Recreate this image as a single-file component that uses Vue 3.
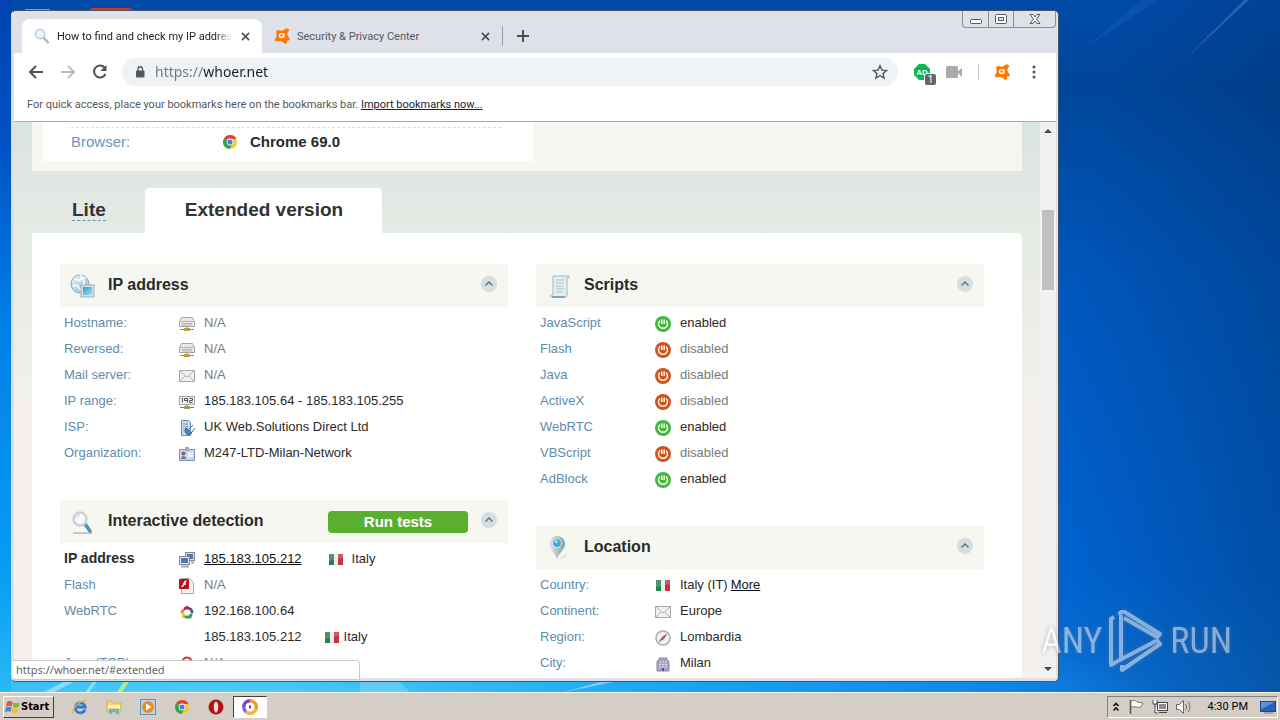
<template>
  <svg class="sprite" aria-hidden="true">
    <defs>
      <linearGradient id="sky" x1="0" y1="0" x2="1" y2="1">
        <stop offset="0" stop-color="#eef6fb" />
        <stop offset="1" stop-color="#8db4d2" />
      </linearGradient>
      <linearGradient id="screen" x1="0" y1="0" x2="1" y2="1">
        <stop offset="0" stop-color="#2f9cc4" />
        <stop offset="1" stop-color="#9be4f5" />
      </linearGradient>
      <linearGradient id="metal" x1="0" y1="0" x2="1" y2="0">
        <stop offset="0" stop-color="#e8eaeb" />
        <stop offset="1" stop-color="#8f979b" />
      </linearGradient>
    </defs>
    <symbol id="globe" viewBox="0 0 26 26">
      <circle cx="10" cy="11" r="9" fill="url(#sky)" stroke="#8aa8c0" />
      <path d="M4 6c3 0 4 2 6 1s3-3 6-2M3 13c3-2 5 0 6 2s3 1 4 4M10 2c4 3 5 8 3 12" fill="none" stroke="#fff" stroke-width="1.6" />
      <rect x="11" y="12" width="13" height="12" fill="#d3dde3" stroke="#9fb0ba" />
      <rect x="13" y="14" width="9" height="8" fill="url(#screen)" />
    </symbol>
    <symbol id="scroll" viewBox="0 0 26 26">
      <path d="M7 3h16v2h-2v17c0 2-1 2-2 2H5c-1-1-1-2 1-2h1z" fill="#e3eeee" stroke="#a5b8b9" />
      <path d="M6 24h13" stroke="#7c8f90" stroke-width="1.5" />
      <path d="M10 7h8M10 10h8M10 13h7M10 16h8M10 19h6" stroke="#a9c3c5" />
    </symbol>
    <symbol id="magnifier" viewBox="0 0 26 26">
      <path d="M3 24h19" stroke="#c4c9c9" stroke-width="2" />
      <path d="M15 15l5 7" stroke="#4f94b6" stroke-width="3.600" stroke-linecap="round" />
      <circle cx="10" cy="10" r="6.500" fill="#f7fafc" stroke="#cfd1d6" stroke-width="2.500" />
      <path d="M6 10c0-3 2-4 4-4" fill="none" stroke="#dbe9f3" stroke-width="2" />
    </symbol>
    <symbol id="search" viewBox="0 0 16 16">
      <path d="M9.500 9.500l4.500 5" stroke="#a9b1bf" stroke-width="2.2" stroke-linecap="round" />
      <circle cx="6" cy="6" r="4.700" fill="#e9f2fb" stroke="#bcc8da" stroke-width="1.400" />
    </symbol>
    <symbol id="pin" viewBox="0 0 26 26">
      <path d="M12 25l8-6 1 2z" fill="#dcdedd" />
      <path d="M11 25C10 18 3 15 3 9a8 8 0 0 1 16 0c0 6-7 9-8 16z" fill="url(#metal)" />
      <circle cx="11" cy="8" r="4.500" fill="#38aed2" stroke="#dce8ec" />
      <circle cx="10" cy="6.500" r="1.500" fill="#aee8f6" />
    </symbol>
    <symbol id="server" viewBox="0 0 16 16">
      <path d="M2.500 1.500h11l2 4v5H.5v-5z" fill="#e9e9e9" stroke="#a6a6a6" />
      <path d="M1 5.500h14M3 7.500h10M3 9h10" stroke="#b4b4b4" />
      <path d="M8 11v3M1 13.500h14" stroke="#8b8b8b" />
      <path d="M5 13.500h6" stroke="#b9a03c" stroke-width="3" />
    </symbol>
    <symbol id="mail" viewBox="0 0 16 16">
      <rect x=".5" y="2.500" width="15" height="11" fill="#f0f0f0" stroke="#a9a9a9" />
      <path d="M1 3l7 6 7-6M1 13l5-5M15 13l-5-5" fill="none" stroke="#b2b2b2" />
    </symbol>
    <symbol id="range" viewBox="0 0 16 16">
      <rect x=".5" y="2.500" width="15" height="8" fill="#f1f1f1" stroke="#a5a5a5" />
      <path d="M2.500 4.500h1v4M5.500 4.500h3v4M5.500 4.500v2h3M10.500 4.500h3v2h-3v2h3" fill="none" stroke="#555" />
      <path d="M8 11v3M1 13.500h14" stroke="#777" />
      <path d="M5 13.500h6" stroke="#8da35d" stroke-width="3" />
    </symbol>
    <symbol id="isp" viewBox="0 0 16 16">
      <path d="M2.500.5h7l2 2v13h-9z" fill="#c4daea" stroke="#668eaf" />
      <path d="M4 4h5M4 7h5M4 10h3" stroke="#779dbb" />
      <path d="M7 8l6 5-4 2-3-3z" fill="#4787bb" stroke="#2f5f8f" />
      <path d="M10 9l4-4M13 12l3-4" stroke="#3c6c98" />
    </symbol>
    <symbol id="badge" viewBox="0 0 16 16">
      <rect x=".5" y="3.500" width="15" height="11" fill="#c8d5f2" stroke="#8393bd" />
      <rect x="6" y="1" width="4" height="4" fill="#a8a8ae" />
      <path d="M9 7.500h5M9 10h5" stroke="#fff" stroke-width="1.500" />
      <circle cx="4.500" cy="7.500" r="2" fill="#8b6350" />
      <path d="M2 13c0-4 5-4 5 0z" fill="#6a79a8" />
    </symbol>
    <symbol id="network" viewBox="0 0 16 16">
      <rect x="6.500" y=".5" width="9" height="8" fill="#d8dce5" stroke="#7f8793" />
      <rect x="8" y="2" width="6" height="5" fill="#4f75b2" />
      <rect x=".5" y="4.500" width="10" height="8" fill="#e5e8ee" stroke="#7f8793" />
      <rect x="2" y="6" width="7" height="5" fill="#4f75b2" />
      <path d="M2 14.500h8M12 10.500h3" stroke="#a5a5a5" stroke-width="2" />
    </symbol>
    <symbol id="flash" viewBox="0 0 16 16">
      <path d="M2.500.5h8l4 4v11h-12z" fill="#f4f4f4" stroke="#aaa" />
      <rect x="0" y="1" width="10" height="10" rx="1" fill="#b51018" />
      <path d="M7.500 3C5 3 5.500 5 4.500 7c-.5 1-1 1.500-2 1.500M4 6h3" fill="none" stroke="#fff" stroke-width="1.500" />
    </symbol>
    <symbol id="webrtc" viewBox="0 0 16 16">
      <g fill="none" stroke-width="3" stroke-linecap="round">
        <path d="M4 6.500L3 8" stroke="#df8732" />
        <path d="M4.500 10.500v2" stroke="#dfc336" />
        <path d="M7 13h4l1-2" stroke="#3c9b51" />
        <path d="M13 8l-1-2.500" stroke="#3a69a8" />
        <path d="M6 4.500l2-1 2 1" stroke="#b5272b" />
      </g>
    </symbol>
    <symbol id="java" viewBox="0 0 16 16">
      <circle cx="8" cy="6" r="4.500" fill="none" stroke="#d62b32" stroke-width="2" />
    </symbol>
    <symbol id="italy" viewBox="0 0 16 16">
      <rect x="1" y="2" width="5" height="11" fill="#23824a" />
      <rect x="6" y="2" width="4" height="11" fill="#ececec" />
      <rect x="10" y="2" width="5" height="11" fill="#c23542" />
      <path d="M1 2h14v4L1 9z" fill="#fff" opacity=".18" />
    </symbol>
    <symbol id="power" viewBox="0 0 16 16">
      <circle cx="8" cy="8" r="8" fill="currentColor" />
      <path d="M5 4.500a4.500 4.500 0 1 0 6 0M6.800 3.500v4.500M9.200 3.500v4.500" fill="none" stroke="#fffbe2" stroke-width="1.500" />
    </symbol>
    <symbol id="compass" viewBox="0 0 16 16">
      <circle cx="8" cy="8" r="7" fill="#f1f1ec" stroke="#acaca8" stroke-width="1.500" />
      <path d="M12.500 3.500L9 9 7 7z" fill="#bd4747" />
      <path d="M3.500 12.500L7 7l2 2z" fill="#4f6db0" />
    </symbol>
    <symbol id="building" viewBox="0 0 16 16">
      <path d="M4 2h8v3h2v10H2V5h2z" fill="#a6a5c5" stroke="#8b89aa" />
      <path d="M4 6h8M4 8.500h8M4 11h8" stroke="#e2e1f0" stroke-dasharray="2 1" />
      <rect x="7" y="12" width="2" height="3" fill="#55527a" />
    </symbol>
    <symbol id="chrome" viewBox="0 0 16 16">
      <circle cx="8" cy="8" r="7" fill="#f7cb2d" />
      <path d="M8 8L2 4.500A7 7 0 0 1 14.500 5H8z" fill="#dd4437" />
      <path d="M2 4.500a7 7 0 0 0 5.300 10.500L11 9.500 8 8z" fill="#31a251" />
      <circle cx="8" cy="8" r="3.400" fill="#fff" />
      <circle cx="8" cy="8" r="2.600" fill="#3f7fe2" />
    </symbol>
    <symbol id="avast" viewBox="0 0 18 18">
      <path d="M3 3C4.500 1.500 6 3 8 3c2 0 3-1 4.500-2C14 0 17 .5 17 2.500c0 1.500-2 2-2 4s1.500 4 2.500 5-.5 3-1.500 2.500-1.500.5-1.500 2c0 2-2 2.500-3.500 1-1.500-2-3-2.500-5-2.500-2 0-4.500 1-5-.5S2.500 11 3 9 1.500 5 3 3z" fill="#ff7800" />
      <circle cx="8.500" cy="8.500" r="2.200" fill="none" stroke="#fff" stroke-width="1.500" />
      <path d="M11.200 5.800v5.200" stroke="#fff" stroke-width="1.300" />
    </symbol>
    <symbol id="close" viewBox="0 0 10 10">
      <path d="M1 1l8 8M9 1L1 9" stroke="currentColor" stroke-width="1.700" />
    </symbol>
  </svg>

  <div class="desktop">
    <svg class="rays" viewBox="0 0 1280 720" preserveAspectRatio="none" aria-hidden="true">
      <path d="M1182 62L1246-2h5z" fill="#8fc0ef" opacity=".25" />
      <path d="M1085 48L1160-2h-16z" fill="#6fa6dd" opacity=".1" />
      <path d="M25 9h25v2H25z" fill="#7ba3c9" />
      <path d="M92 8h38l4 3H88z" fill="#d8301f" />
      <path d="M40 694l28-14h10l-28 14zM84 694l10-14h4l-10 14z" fill="#c9f3ff" opacity=".55" />
      <path d="M360 682h40l10 10h-50z" fill="#c9f3ff" opacity=".25" />
      <path d="M116 694l9-14h5l-9 14z" fill="#b4ea8a" />
      <path d="M560 693l44-12h14z" fill="#b7e5ff" opacity=".6" />
    </svg>

    <main class="window">
      <header class="tabstrip">
        <div class="tab active">
          <svg class="favicon"><use href="#search" /></svg>
          <button class="tabTitle">How to find and check my IP address</button>
          <button class="tabClose" aria-label="Close tab"><svg><use href="#close" /></svg></button>
        </div>
        <div class="tab">
          <svg class="favicon"><use href="#avast" /></svg>
          <button class="tabTitle">Security &amp; Privacy Center</button>
          <button class="tabClose" aria-label="Close tab"><svg><use href="#close" /></svg></button>
        </div>
        <button class="newTab" aria-label="New tab">
          <svg viewBox="0 0 12 12"><path d="M6 0v12M0 6h12" stroke="#4a4d52" stroke-width="2" /></svg>
        </button>
        <div class="winControls">
          <button aria-label="Minimize">
            <svg viewBox="0 0 14 12"><rect x="1.500" y="6.500" width="11" height="4" rx="1" fill="#fff" stroke="#555a66" /></svg>
          </button>
          <button aria-label="Maximize">
            <svg viewBox="0 0 14 12"><rect x="1.500" y="1.500" width="11" height="9" rx="1" fill="#fff" stroke="#555a66" /><rect x="4.500" y="4.500" width="5" height="3" fill="#e4e5ea" stroke="#555a66" /></svg>
          </button>
          <button class="wide" aria-label="Close">
            <svg viewBox="0 0 14 12"><path d="M2 1.500h3l2 2.500 2-2.500h3L8.500 6l3.500 4.500H9L7 8l-2 2.500H2L5.500 6z" fill="#fff" stroke="#555a66" /></svg>
          </button>
        </div>
      </header>

      <nav class="toolbar">
        <button aria-label="Back">
          <svg viewBox="0 0 16 16"><path d="M15 8H2M8 2L2 8l6 6" fill="none" stroke="#505357" stroke-width="2" /></svg>
        </button>
        <button aria-label="Forward">
          <svg viewBox="0 0 16 16"><path d="M1 8h13M8 2l6 6-6 6" fill="none" stroke="#b9bbbe" stroke-width="2" /></svg>
        </button>
        <button aria-label="Reload">
          <svg viewBox="0 0 16 16"><path d="M13.500 10A6 6 0 1 1 12.500 3.500" fill="none" stroke="#505357" stroke-width="2" /><path d="M14.500 1v6h-6z" fill="#505357" /></svg>
        </button>
        <div class="omnibox">
          <svg class="lock" viewBox="0 0 10 12"><rect x="1" y="4.500" width="8.500" height="7" rx="1" fill="#55585c" /><path d="M3 5V3a2.200 2.200 0 0 1 4.500 0v2" fill="none" stroke="#55585c" stroke-width="1.300" /></svg>
          <input v-model="url" aria-label="Address" spellcheck="false" />
          <button aria-label="Bookmark this page">
            <svg viewBox="0 0 16 16"><path d="M8 1.800l1.900 4.300 4.600.4-3.500 3 1.100 4.600L8 11.700l-4.100 2.400L5 9.500l-3.500-3 4.600-.4z" fill="none" stroke="#505357" stroke-width="1.400" /></svg>
          </button>
        </div>
        <button class="ext adblock" aria-label="AdBlock">
          <svg viewBox="0 0 16 16"><path d="M5 0h6l5 5v6l-5 5H5l-5-5V5z" fill="#10b550" /><text x="8" y="11" text-anchor="middle">AD</text></svg>
          <span class="count">1</span>
        </button>
        <button class="ext" aria-label="Video">
          <svg viewBox="0 0 16 16"><rect x="0" y="2" width="12" height="12" rx="1.500" fill="#aaa" /><path d="M11 8l5-4v9z" fill="#aaa" /></svg>
        </button>
        <span class="divider"></span>
        <button class="ext" aria-label="Avast">
          <svg><use href="#avast" /></svg>
        </button>
        <button class="ext menu" aria-label="Menu">
          <svg viewBox="0 0 16 16" fill="#505357"><circle cx="8" cy="3" r="1.500" /><circle cx="8" cy="8" r="1.500" /><circle cx="8" cy="13" r="1.500" /></svg>
        </button>
      </nav>

      <div class="bookmarks">
        For quick access, place your bookmarks here on the bookmarks bar.
        <a href="#import">Import bookmarks now...</a>
      </div>

      <div class="viewport">
        <div class="page">
          <div class="summary">
            <div class="summaryBox">
              <div class="summaryRow">
                <span class="summaryLabel">Browser:</span>
                <svg><use href="#chrome" /></svg>
                <b>Chrome 69.0</b>
              </div>
            </div>
          </div>

          <div class="versions">
            <button @click="version = 'lite'"><span>Lite</span></button>
            <button class="current" @click="version = 'extended'">Extended version</button>
          </div>

          <div class="report">
            <div v-for="(column, c) in columns" :key="c" class="column">
              <section v-for="block in column" :key="block.title">
                <div class="blockHead">
                  <svg class="blockIcon"><use :href="'#' + block.icon" /></svg>
                  <h2>{{ block.title }}</h2>
                  <button v-if="block.run" class="run">Run tests</button>
                  <button class="toggle" aria-label="Collapse" @click="toggle(block.title)">
                    <svg viewBox="0 0 16 16"><circle cx="8" cy="8" r="8" fill="#d5dfe2" /><path d="M4.500 9.500L8 6l3.500 3.500" fill="none" stroke="#5b7886" stroke-width="1.500" /></svg>
                  </button>
                </div>
                <table v-show="!closed.includes(block.title)">
                  <tbody>
                    <tr v-for="(row, r) in block.rows" :key="r">
                      <th scope="row" :class="{ strong: row.strong }">{{ row.label }}</th>
                      <td class="iconCell">
                        <svg v-if="row.icon" :class="row.state"><use :href="'#' + row.icon" /></svg>
                      </td>
                      <td :class="{ muted: row.value === 'N/A' || row.state === 'disabled' }">
                        <div class="value">
                          <a v-if="row.link" href="#ip">{{ row.value }}</a>
                          <span v-else>{{ row.value }}</span>
                          <a v-if="row.more" class="more" href="#more">More</a>
                          <span v-if="row.country" class="country" :class="{ tight: !row.link }">
                            <svg><use href="#italy" /></svg>{{ row.country }}
                          </span>
                        </div>
                      </td>
                    </tr>
                  </tbody>
                </table>
              </section>
            </div>
          </div>
        </div>
        <div class="scrollbar">
          <svg viewBox="0 0 8 4"><path d="M0 4l4-4 4 4z" /></svg>
          <div class="track"><div class="thumb"></div></div>
          <svg viewBox="0 0 8 4"><path d="M0 0l4 4 4-4z" /></svg>
        </div>
      </div>
      <div class="status">https://whoer.net/#extended</div>
    </main>

    <div class="watermark">
      <span>ANY</span>
      <svg viewBox="0 0 56 62">
        <path d="M6 7L3 9v46l5-3 40-21M13 5v43M13 5l-1-2 3-2 37 23-3 3-33-19M14 55v5l38-26-4-5" fill="none" stroke="#fff" stroke-width="4" stroke-linejoin="round" />
      </svg>
      <span>RUN</span>
    </div>

    <footer class="taskbar">
      <button class="start">
        <svg viewBox="0 0 16 16"><path d="M2 3c2-1.500 4-1 5.500 0L6.500 7.500C5 6.500 3 6.500 1 7.500z" fill="#e5532a" /><path d="M8.500 3.500c2 1 4 1 6 0l-1 4.500c-2 1-4 1-6 0z" fill="#7cb83c" /><path d="M1 8.500c2-1 4-1 5.500 0L5.500 13C4 12 2 12 0 13z" fill="#3a86d8" /><path d="M7.500 9c2 1 4 1 6 0l-1 4.500c-2 1-4 1-6 0z" fill="#f2c02c" /></svg>
        Start
      </button>
      <div class="quick">
        <button aria-label="Internet Explorer">
          <svg viewBox="0 0 16 16"><path d="M13 10.500A5 5 0 1 1 13.200 8H4" fill="none" stroke="#2a7fd4" stroke-width="2.800" /><path d="M1.500 14.500C-1 11 8 0 15 1.500" fill="none" stroke="#e5b63a" stroke-width="1.400" /></svg>
        </button>
        <button aria-label="Explorer">
          <svg viewBox="0 0 16 16"><path d="M1 2h5l1 2h8v9H1z" fill="#f1d574" stroke="#d5b453" /><path d="M2 6h12v3H2z" fill="#fff2b8" /><path d="M3 15v-5h10v5h-3v-2H6v2z" fill="#62b3de" /></svg>
        </button>
        <button aria-label="Media Player">
          <svg viewBox="0 0 16 16"><rect x=".5" y=".5" width="15" height="15" fill="#b7d5ef" stroke="#5b92c4" /><circle cx="8" cy="8" r="6" fill="#f28a1d" /><path d="M6 4.500L11.500 8 6 11.500z" fill="#fff" /></svg>
        </button>
        <button aria-label="Chrome"><svg><use href="#chrome" /></svg></button>
        <button aria-label="Opera">
          <svg viewBox="0 0 16 16"><circle cx="8" cy="8" r="7.500" fill="#b3131b" /><ellipse cx="8" cy="8" rx="2.200" ry="5.500" fill="#e9dedd" /></svg>
        </button>
        <button class="pressed" aria-label="Avast Secure Browser">
          <svg viewBox="0 0 16 16"><g fill="none" stroke-width="4"><path d="M2 8a6 6 0 0 1 6-6" stroke="#7a4cc4" /><path d="M8 2a6 6 0 0 1 5.500 8.500" stroke="#f29a30" /><path d="M13.500 10.500A6 6 0 0 1 4 12.500" stroke="#f0b631" /><path d="M4 12.500A6 6 0 0 1 2 8" stroke="#8d62d6" /></g><circle cx="8" cy="8" r="4.500" fill="#fff" /><path d="M7 6.500h2v2L8 10 7 8.500z" fill="#5a3ea8" /></svg>
        </button>
      </div>
      <div class="tray">
        <button aria-label="Show hidden icons">
          <svg class="chevrons" viewBox="0 0 8 10"><path d="M1.500 4L4 1.500 6.500 4M1.500 8.500L4 6l2.500 2.500" fill="none" stroke="#111" stroke-width="1.600" /></svg>
        </button>
        <button aria-label="Action center">
          <svg viewBox="0 0 16 16"><path d="M2.500 1v14" stroke="#555" stroke-width="1.500" /><path d="M3 2c3-1.500 5 0 6 1l6 1-2 4c-4 1-6-1-10 0z" fill="#fff" stroke="#777" /></svg>
        </button>
        <button aria-label="Network">
          <svg viewBox="0 0 16 16"><rect x="5.500" y="3.500" width="10" height="8" fill="#fff" stroke="#444" /><rect x="7" y="5" width="7" height="5" fill="#8a8a8a" /><path d="M7 13.500h8" stroke="#444" /><path d="M1 1v4h4V1M3 5v9h3" fill="#fff" stroke="#444" /></svg>
        </button>
        <button aria-label="Volume">
          <svg viewBox="0 0 16 16"><path d="M.5 5.500h3l4-4v13l-4-4h-3z" fill="#fff" stroke="#666" /><path d="M9.500 5c1.500 2 1.500 4 0 6M12 3c2.500 3 2.500 7 0 10" fill="none" stroke="#666" /></svg>
        </button>
        <time>4:30 PM</time>
        <button class="show" aria-label="Show desktop">
          <svg viewBox="0 0 16 16"><rect x=".5" y="2.500" width="15" height="10" fill="#2862b8" stroke="#23488a" /><path d="M1 3h14L1 10z" fill="#5b93dc" /><path d="M4 14h9" stroke="#777" /></svg>
        </button>
      </div>
    </footer>
  </div>
</template>

<script setup>
import { ref } from "vue";

const url = ref("https://whoer.net");
const version = ref("extended");
const closed = ref([]);

function toggle(title) {
  closed.value = closed.value.includes(title)
    ? closed.value.filter((item) => item !== title)
    : [...closed.value, title];
}

const script = (label, state) => ({ label, icon: "power", value: state, state });

const columns = [
  [
    {
      title: "IP address",
      icon: "globe",
      rows: [
        { label: "Hostname:", icon: "server", value: "N/A" },
        { label: "Reversed:", icon: "server", value: "N/A" },
        { label: "Mail server:", icon: "mail", value: "N/A" },
        { label: "IP range:", icon: "range", value: "185.183.105.64 - 185.183.105.255" },
        { label: "ISP:", icon: "isp", value: "UK Web.Solutions Direct Ltd" },
        { label: "Organization:", icon: "badge", value: "M247-LTD-Milan-Network" },
      ],
    },
    {
      title: "Interactive detection",
      icon: "magnifier",
      run: true,
      rows: [
        { label: "IP address", icon: "network", value: "185.183.105.212", link: true, country: "Italy", strong: true },
        { label: "Flash", icon: "flash", value: "N/A" },
        { label: "WebRTC", icon: "webrtc", value: "192.168.100.64" },
        { label: "", value: "185.183.105.212", country: "Italy" },
        { label: "Java (TCP)", icon: "java", value: "N/A" },
      ],
    },
  ],
  [
    {
      title: "Scripts",
      icon: "scroll",
      rows: [
        script("JavaScript", "enabled"),
        script("Flash", "disabled"),
        script("Java", "disabled"),
        script("ActiveX", "disabled"),
        script("WebRTC", "enabled"),
        script("VBScript", "disabled"),
        script("AdBlock", "enabled"),
      ],
    },
    {
      title: "Location",
      icon: "pin",
      rows: [
        { label: "Country:", icon: "italy", value: "Italy (IT)", more: true },
        { label: "Continent:", icon: "mail", value: "Europe" },
        { label: "Region:", icon: "compass", value: "Lombardia" },
        { label: "City:", icon: "building", value: "Milan" },
      ],
    },
  ],
];
</script>

<style>
html,
body {
  height: 100%;
  margin: 0;
  overflow: hidden;
}
</style>

<style scoped>
* {
  box-sizing: border-box;
}

button {
  border: none;
  background: none;
  padding: 0;
  font: inherit;
  color: inherit;
  cursor: pointer;
}

svg {
  display: block;
  flex: none;
  width: 16px;
  height: 16px;
}

.sprite {
  position: absolute;
  width: 0;
  height: 0;
}

.desktop {
  position: relative;
  height: 100vh;
  display: flex;
  flex-direction: column;
  overflow: hidden;
  font-family: Roboto, "Noto Sans", sans-serif;
  font-size: 11px;
  color: #222;
  background:
    linear-gradient(to bottom, #0042b0 0%, #0052c4 20%, #0080e6 45%, #0a9cf2 80%, #28b8f4 96%) 0 0 / 11px 100% no-repeat,
    radial-gradient(ellipse 75% 14% at 16% 97%, #58d4fa 0%, rgba(30, 170, 245, 0.9) 50%, rgba(0, 120, 230, 0) 100%),
    linear-gradient(100deg, rgba(0, 30, 80, 0) 80%, rgba(0, 35, 80, 0.4) 100%),
    linear-gradient(to bottom, #004aa8 0%, #00469a 12%, #0056bb 38%, #0067d8 80%, #0c7ce6 100%);
}

.rays {
  position: absolute;
  inset: 0;
  width: 100%;
  height: 100%;
}

/* browser window */
.window {
  position: relative;
  flex: 1;
  min-height: 0;
  margin: 10px 221px 10px 11px;
  padding: 0 2px 3px;
  display: flex;
  flex-direction: column;
  background: #dee1e8;
  border: 1px solid #47556b;
  border-left-color: #d5dae4;
  border-radius: 5px;
}

.tabstrip {
  height: 42px;
  display: flex;
  align-items: flex-end;
  padding-left: 8px;
}

.tab {
  width: 240px;
  height: 34px;
  display: flex;
  align-items: center;
  padding: 0 12px;
  color: #565a60;
}

.tab.active {
  background: #fff;
  border-radius: 8px 8px 0 0;
  color: #222;
}

.favicon {
  margin-right: 7px;
}

.tabTitle {
  flex: 1;
  min-width: 0;
  overflow: hidden;
  white-space: nowrap;
  text-align: left;
}

.active .tabTitle {
  -webkit-mask-image: linear-gradient(to right, #000 90%, transparent);
  mask-image: linear-gradient(to right, #000 90%, transparent);
}

.tabClose {
  margin-left: 9px;
  color: #4a4d52;
}

.tabClose svg {
  width: 9px;
  height: 9px;
}

.newTab {
  height: 20px;
  margin-bottom: 7px;
  padding: 0 14px;
  border-left: 1px solid #9a9da5;
}

.newTab svg {
  width: 12px;
  height: 12px;
}

.winControls {
  display: flex;
  align-self: flex-start;
  margin-left: auto;
  border: 1px solid #8a8e98;
  border-top: none;
  border-radius: 0 0 4px 4px;
}

.winControls button {
  width: 25px;
  height: 16px;
  display: flex;
  align-items: center;
  justify-content: center;
}

.winControls button + button {
  border-left: 1px solid #8a8e98;
}

.winControls .wide {
  width: 42px;
}

.winControls svg {
  width: 14px;
  height: 12px;
}

.toolbar {
  height: 38px;
  display: flex;
  align-items: center;
  padding: 0 14px;
  background: #fff;
}

.toolbar > button {
  margin-right: 16px;
}

.omnibox {
  flex: 1;
  height: 28px;
  display: flex;
  align-items: center;
  padding: 0 10px 0 13px;
  margin-right: 16px;
  margin-left: -2px;
  border-radius: 14px;
  background: #f0f3f5;
}

.lock {
  width: 10px;
  height: 12px;
  margin-right: 10px;
}

.omnibox input {
  flex: 1;
  min-width: 0;
  border: none;
  outline: none;
  padding: 0 0 2px;
  font: 14px "Noto Sans", sans-serif;
  color: transparent;
  background: linear-gradient(to right, #70757a 48px, #1c1d20 48px);
  -webkit-background-clip: text;
  background-clip: text;
}

.toolbar .ext {
  position: relative;
}

.toolbar .menu {
  margin: 0;
}

.adblock text {
  font: bold 8px "Liberation Sans", sans-serif;
  fill: #fff;
}

.count {
  position: absolute;
  left: 10px;
  top: 9px;
  width: 13px;
  height: 13px;
  border: 1px solid #fff;
  border-radius: 3px;
  background: #666;
  color: #fff;
  font-size: 10px;
  line-height: 11px;
}

.divider {
  width: 1px;
  height: 16px;
  margin-right: 15px;
  background: #ccc;
}

.bookmarks {
  height: 31px;
  padding: 6px 13px 4px;
  line-height: 16px;
  background: #fff;
  border-bottom: 1px solid #a9acac;
  color: #55585c;
}

.bookmarks a {
  color: #1a2334;
}

/* page */
.viewport {
  flex: 1;
  min-height: 0;
  display: flex;
  overflow: hidden;
  background: #f1f1f1;
}

.page {
  flex: 1;
  min-width: 0;
  padding: 0 18px;
  overflow: hidden;
  background: linear-gradient(to bottom, #dbe3e3 0, #e5eae4 110px, #f4f1ec 300px);
  font-family: "Liberation Sans", Arial, sans-serif;
  font-size: 13px;
  color: #2a2a2a;
}

.summary {
  padding: 0 0 10px 11px;
  background: #f7f7f1;
}

.summaryBox {
  width: 50%;
  padding: 5px 32px 0 28px;
  background: #fff;
}

.summaryRow {
  height: 34px;
  display: flex;
  align-items: center;
  padding-bottom: 6px;
  border-top: 1px dashed #d9dedf;
  font-size: 15px;
}

.summaryLabel {
  width: 151px;
  color: #6b97b5;
}

.summaryRow b {
  margin-left: 12px;
}

.versions {
  display: flex;
  margin-top: 17px;
}

.versions button {
  height: 45px;
  padding: 0 39px 2px 40px;
  font-size: 19px;
  font-weight: bold;
  color: #333;
}

.versions button.current {
  background: #fff;
  border-radius: 4px 4px 0 0;
}

.versions span {
  border-bottom: 1px dashed #6d97a3;
}

.report {
  display: grid;
  grid-template-columns: 1fr 1fr;
  gap: 28px;
  padding: 31px 38px 31px 28px;
  background: #fff;
  border-radius: 0 4px 0 0;
}

.column {
  display: flex;
  flex-direction: column;
  gap: 35px;
}

.blockHead {
  height: 43px;
  display: flex;
  align-items: center;
  padding: 0 11px 3px 10px;
  margin-bottom: 2px;
  background: #f7f7f2;
}

.blockIcon {
  width: 26px;
  height: 26px;
  margin-top: 4px;
}

.blockHead h2 {
  flex: 1;
  margin: 2px 0 0 12px;
  font-size: 16px;
  line-height: 20px;
}

.run {
  width: 140px;
  height: 22px;
  margin-right: 13px;
  margin-top: 3px;
  border-radius: 4px;
  background: #5aaf31;
  color: #fff;
  font-size: 15px;
  font-weight: bold;
  line-height: 22px;
}

table {
  width: 100%;
  border-collapse: collapse;
}

tr {
  height: 26px;
}

th {
  width: 119px;
  padding: 0 0 0 4px;
  text-align: left;
  font-weight: normal;
  color: #5e8cab;
}

th.strong {
  font-size: 14px;
  font-weight: bold;
  color: #2a2a2a;
}

td {
  padding: 0;
}

.iconCell {
  width: 25px;
  padding-top: 4px;
}

.value {
  display: flex;
  align-items: center;
}

.value a {
  color: #111;
}

.muted {
  color: #7a7a7a;
}

.enabled {
  color: #3fb944;
}

.disabled {
  color: #d2521f;
}

.value .more {
  margin-left: 3px;
}

.country {
  display: flex;
  align-items: center;
  gap: 8px;
  margin-left: 26px;
}

.country.tight {
  gap: 4px;
  margin-left: 22px;
}

.country svg {
  margin-top: 3px;
}

.scrollbar {
  width: 16px;
  display: flex;
  flex-direction: column;
  align-items: center;
  padding: 7px 0;
}

.scrollbar svg {
  width: 8px;
  height: 4px;
  fill: #444;
}

.track {
  flex: 1;
  width: 12px;
}

.thumb {
  height: 80px;
  margin-top: 77px;
  background: #c1c1c1;
}

.status {
  position: absolute;
  left: 0;
  bottom: 1px;
  width: 348px;
  height: 20px;
  padding-left: 4px;
  line-height: 18px;
  font-family: "Noto Sans", sans-serif;
  background: #fff;
  border: 1px solid #c8cbce;
  border-left: none;
  border-radius: 0 4px 0 4px;
  color: #666;
}

.watermark {
  position: absolute;
  right: 48px;
  bottom: 48px;
  display: flex;
  align-items: center;
  gap: 6px;
  font: 36px "Roboto Condensed", Roboto, sans-serif;
  color: #fff;
  opacity: 0.5;
  filter: drop-shadow(0 0 2px #777);
}

.watermark svg {
  width: 56px;
  height: 62px;
}

/* taskbar */
.taskbar {
  position: relative;
  height: 28px;
  display: flex;
  align-items: center;
  padding: 0 2px 0 3px;
  background: #d5cec7;
  border-top: 1px solid #f6f4f0;
}

.start {
  height: 22px;
  display: flex;
  align-items: center;
  padding: 0 4px 0 1px;
  border: 1px solid;
  border-color: #fff #404040 #404040 #fff;
  font: bold 11px "DejaVu Sans Condensed", "Noto Sans", sans-serif;
  color: #000;
}

.quick {
  display: flex;
  margin-left: 9px;
}

.quick button {
  width: 34px;
  height: 22px;
  display: flex;
  align-items: center;
  justify-content: center;
}

.quick .pressed {
  background: #fff;
  border: 1px solid;
  border-color: #404040 #fff #fff #404040;
}

.tray {
  height: 22px;
  display: flex;
  align-items: center;
  gap: 8px;
  margin-left: auto;
  padding: 0 1px 0 4px;
  border: 1px solid;
  border-color: #808080 #fff #fff #808080;
}

.tray .chevrons {
  width: 8px;
  height: 10px;
}

.tray time {
  margin: 0 4px 0 8px;
  color: #000;
}
</style>
